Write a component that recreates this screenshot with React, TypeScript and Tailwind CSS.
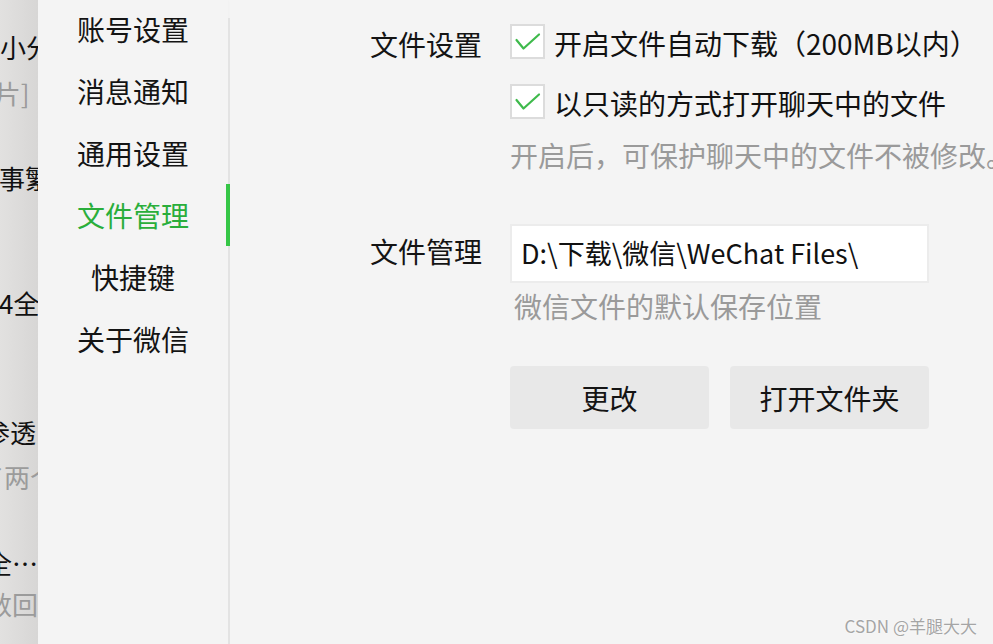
import React from 'react';

const FONT = '"Noto Sans CJK SC", "Noto Sans", sans-serif';

const navItems = ['账号设置', '消息通知', '通用设置', '文件管理', '快捷键', '关于微信'];

const CheckBox: React.FC = () => (
  <span className="relative flex h-[35px] w-[35px] shrink-0 items-center justify-center border-2 border-[#dcdcdc] bg-white">
    <svg width="31" height="31" viewBox="0 0 31 31" fill="none">
      <polyline points="4.5,14 11.5,22.5 27,8.5" stroke="#3fba4c" strokeWidth="2.2" strokeLinecap="round" strokeLinejoin="round" />
    </svg>
  </span>
);

// chat list behind the settings window, only its right edge shows
const ChatStrip: React.FC = () => (
  <div className="relative w-[38px] shrink-0 overflow-hidden bg-gradient-to-r from-[#e2e1e0] to-[#d7d6d5] text-[26px] leading-[30px] whitespace-nowrap">
    <div className="mt-[32px] -ml-[26px] h-[30px] text-[#111]">个小分享</div>
    <div className="mt-[16px] -ml-[40px] h-[30px] text-[#9b9b9b]">[图片]</div>
    <div className="mt-[55px] -ml-[1px] h-[30px] text-[#111]">事繁</div>
    <div className="mt-[95px] -ml-[1px] h-[30px] text-[#111]">4全年</div>
    <div className="mt-[99px] -ml-[16px] h-[30px] text-[#111]">参透</div>
    <div className="mt-[15px] -ml-[22px] h-[30px] text-[#9b9b9b]">了两个</div>
    <div className="mt-[56px] -ml-[14px] h-[30px] text-[#111]">全…</div>
    <div className="mt-[11px] -ml-[14px] h-[30px] text-[#9b9b9b]">数回了</div>
  </div>
);

const SideNav: React.FC = () => (
  <div className="flex shrink-0">
    <nav className="flex w-[190px] flex-col shadow-[-3px_0_5px_rgba(0,0,0,0.12)]">
      {navItems.map(item => {
        const active = item === '文件管理';
        return (
          <div key={item} className="relative flex h-[62px] items-center justify-center pb-[4px]">
            <span className={`text-[28px] leading-[40px] ${active ? 'text-[#2aae3b]' : 'text-[#141414]'}`}>{item}</span>
            {active && <span className="absolute -right-[2px] top-[-2px] z-10 h-[62px] w-[4px] bg-[#35c646]" />}
          </div>
        );
      })}
    </nav>
    <div className="mt-[18px] w-[2px] bg-[#e3e3e3]" />
  </div>
);

const FileSettings: React.FC = () => (
  <div className="flex-1 pl-[140px] pt-[24px] text-[28px] whitespace-nowrap">
    <div className="flex">
      <div className="w-[112px] shrink-0 leading-[40px] text-[#141414]">文件设置</div>
      <div className="ml-[28px] flex flex-col">
        <div className="flex h-[35px] items-center gap-[9px]">
          <CheckBox />
          <span className="pt-[4px] leading-[35px] text-[#111]">开启文件自动下载（200MB以内）</span>
        </div>
        <div className="mt-[25px] flex h-[35px] items-center gap-[9px]">
          <CheckBox />
          <span className="pt-[4px] leading-[35px] text-[#111]">以只读的方式打开聊天中的文件</span>
        </div>
        <div className="mt-[16px] leading-[40px] text-[#9a9a9a]">开启后，可保护聊天中的文件不被修改。</div>
      </div>
    </div>

    <div className="mt-[49px] flex">
      <div className="mt-[7px] w-[112px] shrink-0 leading-[40px] text-[#141414]">文件管理</div>
      <div className="ml-[28px] flex flex-col">
        <div className="flex h-[59px] w-[419px] items-center border-2 border-[#ececec] bg-white pl-[9px] text-[27px] text-[#111]">
          D:\下载\微信\WeChat Files\
        </div>
        <div className="mt-[3px] pl-[4px] leading-[40px] text-[#9a9a9a]">微信文件的默认保存位置</div>
        <div className="mt-[40px] flex gap-[21px]">
          <button className="h-[63px] w-[199px] rounded-[4px] bg-[#e8e8e8] text-[28px] text-[#141414]">更改</button>
          <button className="h-[63px] w-[199px] rounded-[4px] bg-[#e8e8e8] text-[28px] text-[#141414]">打开文件夹</button>
        </div>
      </div>
    </div>
  </div>
);

export default function App() {
  return (
    <div className="relative flex h-[644px] w-[993px] overflow-hidden bg-[#f4f4f4]" style={{ fontFamily: FONT }}>
      <ChatStrip />
      <SideNav />
      <FileSettings />
      <div className="absolute right-[16px] bottom-[8px] text-[17px] leading-[20px] text-[#a5a5a5] [text-shadow:0_0_2px_#fff]">
        CSDN @羊腿大大
      </div>
    </div>
  );
}
